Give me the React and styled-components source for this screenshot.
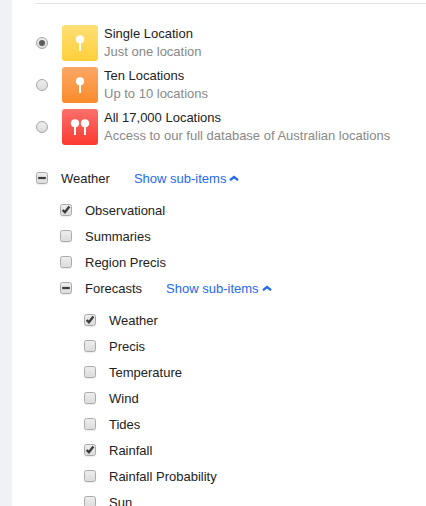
import React from "react";
import styled, { createGlobalStyle } from "styled-components";

const GlobalStyle = createGlobalStyle`
  * { box-sizing: border-box; }
  body {
    margin: 0;
    overflow: hidden;
    background: #fff;
    font-family: "Liberation Sans", Arial, sans-serif;
    font-size: 13px;
    color: #222;
  }
`;

const Page = styled.div`
  display: flex;
  height: 506px;
  overflow: hidden;
`;

const Gutter = styled.div`
  flex: 0 0 12px;
  background: #f0f1f6;
`;

const Panel = styled.main`
  flex: 1;
  min-width: 0;
  padding: 3px 0 0 24px;
`;

const Divider = styled.hr`
  margin: 0 0 21px;
  border: 0;
  height: 1px;
  background: #e2e2e2;
`;

const Options = styled.div`
  display: flex;
  flex-direction: column;
  gap: 6px;
  margin-bottom: 20px;
`;

const Option = styled.label`
  display: flex;
  align-items: center;
  height: 36px;
`;

const Radio = styled.span`
  display: grid;
  place-items: center;
  flex: none;
  width: 12px;
  height: 12px;
  margin-right: 14px;
  border: 1px solid #a6a6a6;
  border-radius: 50%;
  background: linear-gradient(#ededed, #dcdcdc);

  &::after {
    content: "";
    width: 6px;
    height: 6px;
    border-radius: 50%;
    background: ${(p) => (p.$checked ? "#5c5c5c" : "transparent")};
  }
`;

const Tile = styled.span`
  flex: none;
  width: 36px;
  height: 36px;
  margin-right: 6px;
  border-radius: 3px;
  background: linear-gradient(${(p) => p.$from}, ${(p) => p.$to});

  svg { display: block; }
`;

const OptionText = styled.span`
  display: flex;
  flex-direction: column;
  line-height: 18px;
  white-space: nowrap;
`;

const Hint = styled.span`
  color: #888;
`;

const Branch = styled.ul`
  margin: 0;
  padding: ${(p) => (p.$nested ? "6px 0 0 24px" : "0")};
  list-style: none;
`;

const Row = styled.div`
  display: flex;
  align-items: center;
  height: 26px;
  white-space: nowrap;
`;

const Box = styled.span`
  flex: none;
  width: 12px;
  height: 12px;
  margin-right: 13px;
  border: 1px solid #aaa;
  border-radius: 2.5px;
  background: linear-gradient(#ededed, #dcdcdc);
  box-shadow: 0 1px 1px rgba(0, 0, 0, 0.08);

  svg { display: block; overflow: visible; }
`;

const Toggle = styled.a`
  display: flex;
  align-items: center;
  gap: 3px;
  margin-left: 24px;
  color: #2469ea;
`;

const Pin = ({ x }) => (
  <g fill="#fff">
    <circle cx={x} cy="14.3" r="4.1" />
    <rect x={x - 1} y="17" width="2" height="9" />
  </g>
);

const options = [
  { title: "Single Location", hint: "Just one location", from: "#ffdf75", to: "#fed03a", pins: [18], checked: true },
  { title: "Ten Locations", hint: "Up to 10 locations", from: "#fda765", to: "#fa8b2b", pins: [18] },
  { title: "All 17,000 Locations", hint: "Access to our full database of Australian locations", from: "#fd706b", to: "#fb3a31", pins: [13, 23] },
];

const tree = [
  {
    label: "Weather", state: "mixed", children: [
      { label: "Observational", state: "on" },
      { label: "Summaries" },
      { label: "Region Precis" },
      {
        label: "Forecasts", state: "mixed", children: [
          { label: "Weather", state: "on" },
          { label: "Precis" },
          { label: "Temperature" },
          { label: "Wind" },
          { label: "Tides" },
          { label: "Rainfall", state: "on" },
          { label: "Rainfall Probability" },
          { label: "Sun" },
        ],
      },
    ],
  },
];

const Checkbox = ({ state }) => (
  <Box>
    <svg width="10" height="10" viewBox="0 0 10 10" fill="none" stroke="#3c3c3c">
      {state === "on" && <path d="M1.6 5 L3.9 7.2 L8.4 1.6" strokeWidth="2.4" />}
      {state === "mixed" && <path d="M1.2 5 H8.8" strokeWidth="2.2" />}
    </svg>
  </Box>
);

const Items = ({ items, nested }) => (
  <Branch $nested={nested}>
    {items.map((item) => (
      <li key={item.label}>
        <Row>
          <Checkbox state={item.state} />
          <span>{item.label}</span>
          {item.children && (
            <Toggle>
              Show sub-items
              <svg width="10" height="6" viewBox="0 0 10 6" fill="none" stroke="#2469ea" strokeWidth="2.3">
                <path d="M1 5.2 L5 2 L9 5.2" />
              </svg>
            </Toggle>
          )}
        </Row>
        {item.children && <Items items={item.children} nested />}
      </li>
    ))}
  </Branch>
);

export default function App() {
  return (
    <Page>
      <GlobalStyle />
      <Gutter />
      <Panel>
        <Divider />
        <Options>
          {options.map((o) => (
            <Option key={o.title}>
              <Radio $checked={o.checked} />
              <Tile $from={o.from} $to={o.to}>
                <svg width="36" height="36" viewBox="0 0 36 36">
                  {o.pins.map((x) => <Pin key={x} x={x} />)}
                </svg>
              </Tile>
              <OptionText>
                <span>{o.title}</span>
                <Hint>{o.hint}</Hint>
              </OptionText>
            </Option>
          ))}
        </Options>
        <Items items={tree} />
      </Panel>
    </Page>
  );
}
